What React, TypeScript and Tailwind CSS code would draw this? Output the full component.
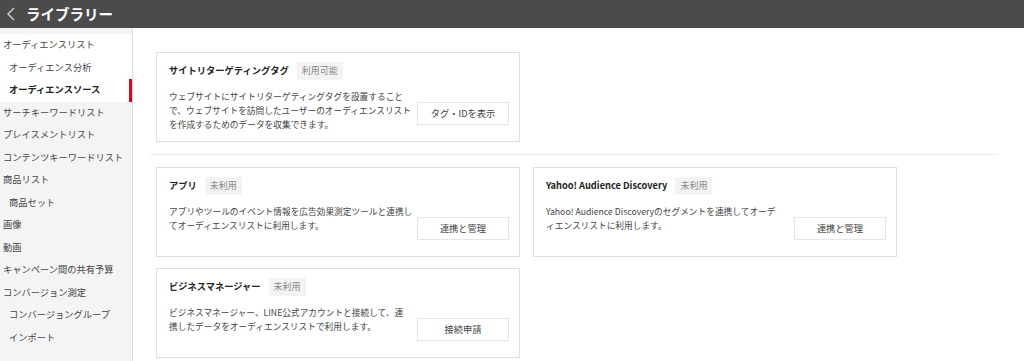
import React from "react";

type NavItem = { label: string; sub?: boolean; active?: boolean };

const groupItems: NavItem[] = [
  { label: "オーディエンスリスト" },
  { label: "オーディエンス分析", sub: true },
  { label: "オーディエンスソース", sub: true, active: true },
];

const navItems: NavItem[] = [
  { label: "サーチキーワードリスト" },
  { label: "プレイスメントリスト" },
  { label: "コンテンツキーワードリスト" },
  { label: "商品リスト" },
  { label: "商品セット", sub: true },
  { label: "画像" },
  { label: "動画" },
  { label: "キャンペーン間の共有予算" },
  { label: "コンバージョン測定" },
  { label: "コンバージョングループ", sub: true },
  { label: "インポート", sub: true },
];

function NavRow({ item }: { item: NavItem }) {
  return (
    <div
      className={`relative flex h-[22.5px] items-center whitespace-nowrap text-[9.25px] ${
        item.sub ? "pl-[9px]" : "pl-[3px]"
      } ${item.active ? "font-bold text-[#222]" : "text-[#444]"}`}
    >
      {item.label}
      {item.active && (
        <span className="absolute right-0 top-0 h-full w-[3px] bg-[#e60012]" />
      )}
    </div>
  );
}

type CardProps = {
  title: string;
  status: string;
  lines: string[];
  action: string;
};

function SourceCard({ title, status, lines, action }: CardProps) {
  return (
    <div className="h-[90px] w-[364px] border border-[#dedede] bg-white px-[12px] pt-[9px]">
      <div className="flex h-[18px] items-center">
        <span className="text-[9.25px] font-bold text-[#222]">{title}</span>
        <span className="ml-[8px] flex h-[18px] items-center bg-[#f3f3f3] px-[5px] text-[9px] text-[#888]">
          {status}
        </span>
      </div>
      <div className="mt-[10px] flex items-start">
        <p className="whitespace-nowrap text-[8.7px] leading-[14px] text-[#444]">
          {lines.map((l, i) => (
            <React.Fragment key={i}>
              {l}
              {i < lines.length - 1 && <br />}
            </React.Fragment>
          ))}
        </p>
        <button className="ml-auto mr-[-2px] mt-[12px] flex h-[23px] w-[92px] shrink-0 items-center justify-center border border-[#e6e6e6] bg-white text-[9.25px] text-[#444]">
          {action}
        </button>
      </div>
    </div>
  );
}

export default function App() {
  return (
    <div
      className="flex h-[361px] w-[1024px] flex-col overflow-hidden bg-white"
      style={{ fontFamily: '"Noto Sans CJK JP", "Noto Sans", sans-serif' }}
    >
      <header className="flex h-[28px] shrink-0 items-center bg-[#4b4b4b]">
        <svg width="12" height="16" viewBox="0 0 12 16" className="ml-[5px]">
          <polyline
            points="9,2 3,8 9,14"
            fill="none"
            stroke="#d0d0d0"
            strokeWidth="1.4"
          />
        </svg>
        <h1 className="ml-[9px] text-[14.5px] font-bold text-white">
          ライブラリー
        </h1>
      </header>
      <div className="flex flex-1">
        <aside className="w-[133px] shrink-0 border-r border-[#dcdcdc] bg-[#f4f4f4] pt-[6px]">
          <div className="bg-white">
            {groupItems.map((it) => (
              <NavRow key={it.label} item={it} />
            ))}
          </div>
          {navItems.map((it) => (
            <NavRow key={it.label} item={it} />
          ))}
        </aside>
        <main className="flex-1 pl-[17px] pr-[26px] pt-[24px]">
          <div className="px-[6px]">
            <SourceCard
              title="サイトリターゲティングタグ"
              status="利用可能"
              lines={[
                "ウェブサイトにサイトリターゲティングタグを設置すること",
                "で、ウェブサイトを訪問したユーザーのオーディエンスリスト",
                "を作成するためのデータを収集できます。",
              ]}
              action="タグ・IDを表示"
            />
          </div>
          <div className="my-[12px] h-px bg-[#ebebeb]" />
          <div className="grid grid-cols-[364px_364px] gap-x-[13px] gap-y-[11px] px-[6px]">
            <SourceCard
              title="アプリ"
              status="未利用"
              lines={[
                "アプリやツールのイベント情報を広告効果測定ツールと連携し",
                "てオーディエンスリストに利用します。",
              ]}
              action="連携と管理"
            />
            <SourceCard
              title="Yahoo! Audience Discovery"
              status="未利用"
              lines={[
                "Yahoo! Audience Discoveryのセグメントを連携してオーデ",
                "ィエンスリストに利用します。",
              ]}
              action="連携と管理"
            />
            <SourceCard
              title="ビジネスマネージャー"
              status="未利用"
              lines={[
                "ビジネスマネージャー、LINE公式アカウントと接続して、連",
                "携したデータをオーディエンスリストで利用します。",
              ]}
              action="接続申請"
            />
          </div>
        </main>
      </div>
    </div>
  );
}
